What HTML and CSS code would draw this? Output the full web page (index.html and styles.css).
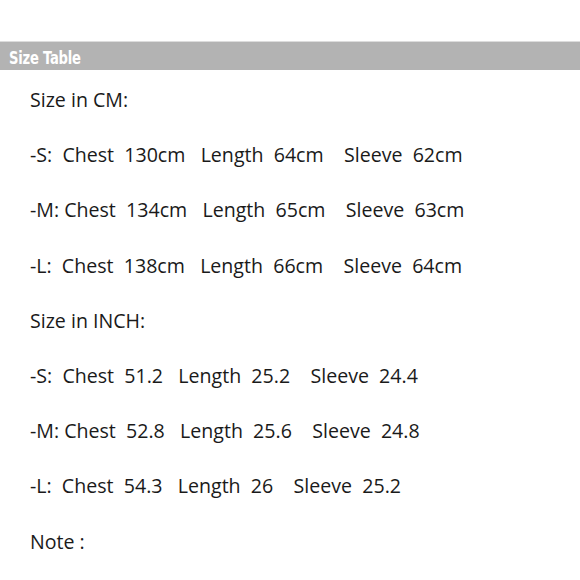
FILE: index.html
```html
<!DOCTYPE html>
<html>
<head>
<meta charset="utf-8">
<link rel="stylesheet" href="styles.css">
</head>
<body>
<div class="page">
  <div class="bar"><span class="bar-title">Size Table</span></div>
  <div class="lines">
    <p class="line">Size in CM:</p>
    <p class="line">-S:  Chest  130cm   Length  64cm    Sleeve  62cm</p>
    <p class="line">-M: Chest  134cm   Length  65cm    Sleeve  63cm</p>
    <p class="line">-L:  Chest  138cm   Length  66cm    Sleeve  64cm</p>
    <p class="line">Size in INCH:</p>
    <p class="line">-S:  Chest  51.2   Length  25.2    Sleeve  24.4</p>
    <p class="line">-M: Chest  52.8   Length  25.6    Sleeve  24.8</p>
    <p class="line">-L:  Chest  54.3   Length  26    Sleeve  25.2</p>
    <p class="line">Note :</p>
  </div>
</div>
</body>
</html>
```

FILE: styles.css
```css
html, body {
  margin: 0;
  padding: 0;
  background: #ffffff;
}
.page {
  width: 580px;
  height: 580px;
  overflow: hidden;
  padding-top: 41px;
  box-sizing: border-box;
}
.bar {
  height: 28px;
  background: #b3b3b3;
  border-top: 1px solid #dcdcdc;
  display: flex;
  align-items: center;
  padding-left: 9px;
}
.bar-title {
  display: inline-block;
  margin-top: 3px;
  font-family: "DejaVu Sans", sans-serif;
  font-weight: bold;
  font-size: 17.5px;
  line-height: 20px;
  color: #ffffff;
  transform: scaleX(0.75);
  transform-origin: left center;
  letter-spacing: -0.3px;
}
.lines {
  padding-left: 30px;
  padding-top: 17px;
}
.line {
  margin: 0;
  height: 55.2px;
  font-family: "Open Sans", sans-serif;
  font-size: 19.6px;
  line-height: 26px;
  color: #1a1a1a;
  white-space: pre;
}
```
